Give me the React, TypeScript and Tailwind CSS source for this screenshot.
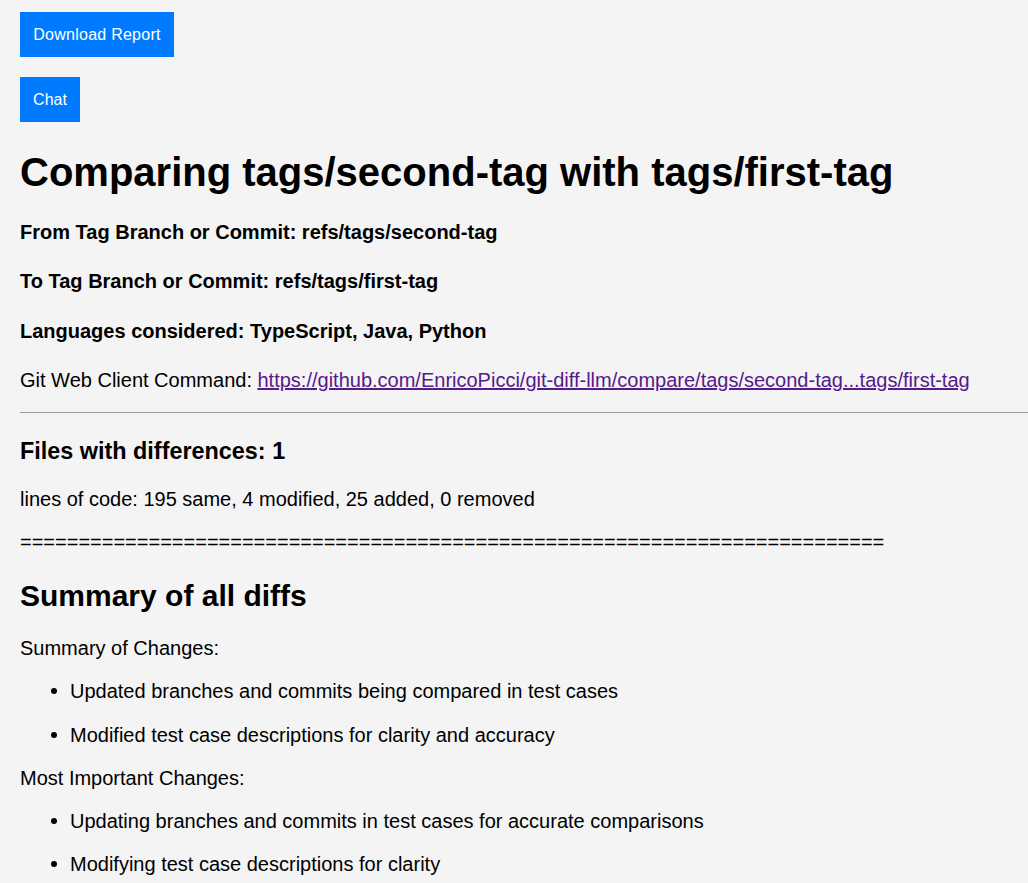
import React from "react";

const Bullet = ({ children }: { children: React.ReactNode }) => (
  <div className="flex items-center h-[24px] leading-[24px]">
    <span className="w-[50px] flex justify-end pr-[13px]">
      <span className="block w-[6px] h-[6px] rounded-full bg-black" />
    </span>
    <span>{children}</span>
  </div>
);

export default function App() {
  return (
    <div
      className="min-h-[883px] bg-[#f4f4f4] text-black overflow-hidden"
      style={{ fontFamily: '"Liberation Sans", Arial, sans-serif' }}
    >
      <div className="flex flex-col px-[20px] pt-[12px] pb-[20px] text-[20px]">
        <div className="flex">
          <button className="h-[45px] w-[154px] bg-[#007bff] text-white text-[16px] leading-none tracking-[0.25px]">
            Download Report
          </button>
        </div>
        <div className="flex mt-[20px]">
          <button className="h-[45px] w-[60px] bg-[#007bff] text-white text-[16px] leading-none">
            Chat
          </button>
        </div>
        <h1 className="mt-[26px] text-[40px] font-bold leading-[48px] whitespace-nowrap">
          Comparing tags/second-tag with tags/first-tag
        </h1>
        <p className="mt-[24px] font-bold leading-[24px]">
          From Tag Branch or Commit: refs/tags/second-tag
        </p>
        <p className="mt-[25px] font-bold leading-[24px]">
          To Tag Branch or Commit: refs/tags/first-tag
        </p>
        <p className="mt-[26px] font-bold leading-[24px]">
          Languages considered: TypeScript, Java, Python
        </p>
        <p className="mt-[25px] leading-[24px] whitespace-nowrap">
          Git Web Client Command:{" "}
          <a href="#" className="text-[#551a8b] underline">
            https://github.com/EnricoPicci/git-diff-llm/compare/tags/second-tag...tags/first-tag
          </a>
        </p>
        <div className="mt-[20px] h-px bg-[#9a9a9a] mr-[-20px]" />
        <h3 className="mt-[24px] text-[23.4px] font-bold leading-[28px]">
          Files with differences: 1
        </h3>
        <p className="mt-[22px] leading-[24px]">
          lines of code: 195 same, 4 modified, 25 added, 0 removed
        </p>
        <p className="mt-[19px] leading-[24px] whitespace-nowrap">
          {"=".repeat(74)}
        </p>
        <h2 className="mt-[24px] text-[30px] font-bold leading-[36px]">
          Summary of all diffs
        </h2>
        <p className="mt-[22px] leading-[24px]">Summary of Changes:</p>
        <div className="mt-[19px]">
          <Bullet>Updated branches and commits being compared in test cases</Bullet>
        </div>
        <div className="mt-[20px]">
          <Bullet>Modified test case descriptions for clarity and accuracy</Bullet>
        </div>
        <p className="mt-[19px] leading-[24px]">Most Important Changes:</p>
        <div className="mt-[19px]">
          <Bullet>Updating branches and commits in test cases for accurate comparisons</Bullet>
        </div>
        <div className="mt-[19px]">
          <Bullet>Modifying test case descriptions for clarity</Bullet>
        </div>
      </div>
    </div>
  );
}
